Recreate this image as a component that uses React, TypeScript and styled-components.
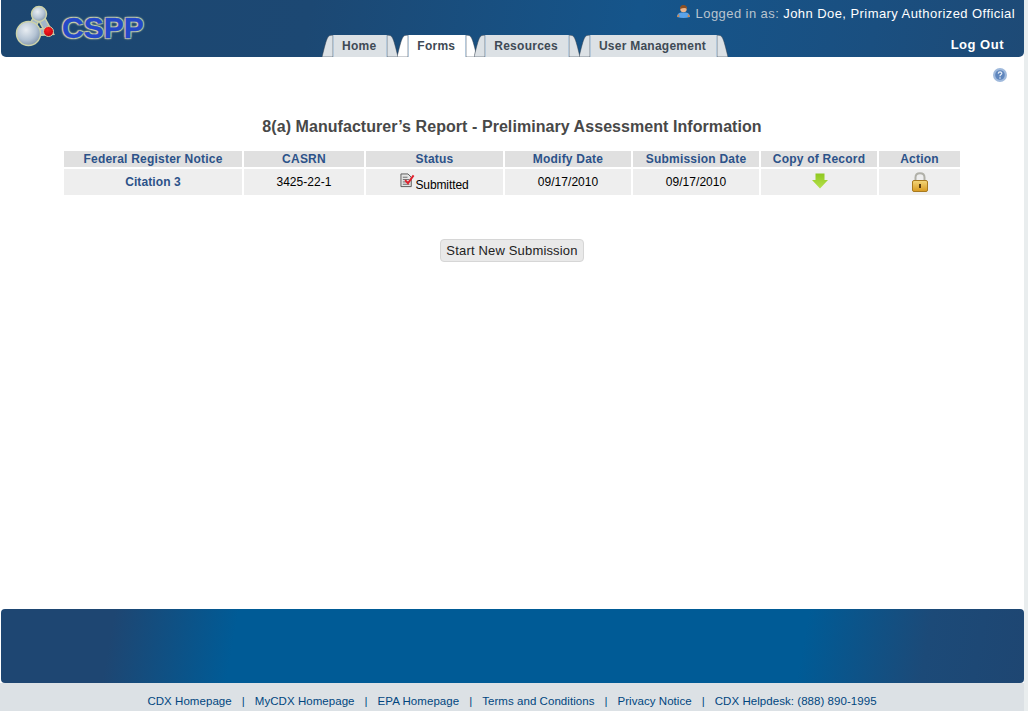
import { Fragment } from "react";
import styled, { createGlobalStyle } from "styled-components";

const GlobalStyle = createGlobalStyle`
  html, body {
    margin: 0;
    padding: 0;
    background: #fff;
    font-family: "Liberation Sans", Arial, sans-serif;
  }
`;

const Page = styled.div`
  display: flex;
  flex-direction: column;
  height: 711px;
  width: 1028px;
  overflow: hidden;
  box-sizing: border-box;
  border-right: 4px solid #e9edee;
`;

const Header = styled.header`
  display: flex;
  height: 57px;
  margin-left: 1px;
  border-radius: 0 0 5px 5px;
  background: linear-gradient(100deg, #1c4670 0%, #1c4873 30%, #15558b 62%, #1a4f80 85%, #1e4a76 100%);
`;

const LogoLink = styled.a`
  display: flex;
  flex: 0 0 321px;
  align-items: flex-start;
  gap: 5px;
  padding: 5px 0 0 14px;
  box-sizing: border-box;
`;

const LogoText = styled.span`
  margin-top: 5px;
  font-size: 30px;
  line-height: 36px;
  font-weight: 700;
  color: #2448c8;
  -webkit-text-stroke: 0.4px #2448c8;
  text-shadow: 0 0 3px #ccd2aa, 1px 1px 1px #ccd2aa, -1px -1px 1px #ccd2aa, 1px -1px 1px #ccd2aa, -1px 1px 1px #ccd2aa;
`;

const Tabs = styled.nav`
  display: flex;
  flex: 0 0 auto;
  align-items: flex-end;
`;

const Tab = styled.a<{ $active?: boolean; $overlap: number }>`
  display: flex;
  height: 22px;
  margin-left: ${(p) => p.$overlap}px;
  color: ${(p) => (p.$active ? "#fff" : "#dce1e5")};
`;

const TabLabel = styled.span<{ $active?: boolean }>`
  padding: 4px 10px 0 8px;
  border-left: 1px solid #b4c8da;
  border-right: 1px solid #b4c8da;
  background: ${(p) => (p.$active ? "#fff" : "#dce1e5")};
  color: #3f4a55;
  font-size: 12px;
  line-height: 14px;
  font-weight: 700;
  letter-spacing: 0.25px;
  white-space: nowrap;
`;

const UserArea = styled.div`
  display: flex;
  flex: 1;
  min-width: 0;
  flex-direction: column;
  align-items: flex-end;
  padding: 4px 9px 0 0;
`;

const UserLine = styled.div`
  display: flex;
  flex-shrink: 0;
  align-items: flex-start;
  gap: 5px;
  font-size: 13px;
  line-height: 20px;
  letter-spacing: 0.43px;
  color: #b9c4cf;
  white-space: nowrap;
`;

const UserName = styled.span`
  color: #fff;
`;

const LogOut = styled.a`
  margin: 12px 11px 0 0;
  font-size: 13px;
  line-height: 18px;
  font-weight: 700;
  letter-spacing: 0.5px;
  color: #fff;
`;

const Main = styled.main`
  display: flex;
  flex-direction: column;
  align-items: center;
  flex: 1;
`;

const HelpRow = styled.div`
  display: flex;
  justify-content: flex-end;
  align-self: stretch;
  height: 14px;
  padding: 11px 17px 0 0;
`;

const Title = styled.h1`
  margin: 34px 0 0;
  font-size: 16px;
  line-height: 22px;
  font-weight: 700;
  letter-spacing: 0.06px;
  color: #484848;
`;

const Table = styled.table`
  width: 900px;
  margin-top: 11px;
  border-collapse: separate;
  border-spacing: 2px;
  table-layout: fixed;
`;

const HeadCell = styled.th`
  height: 16px;
  padding: 0;
  background: #e0e0e0;
  color: #2c5289;
  font-size: 12px;
  line-height: 16px;
  font-weight: 700;
  letter-spacing: 0.22px;
  text-align: center;
`;

const Cell = styled.td`
  height: 26px;
  padding: 0;
  background: #eee;
  color: #000;
  font-size: 12px;
  line-height: 16px;
  letter-spacing: 0.05px;
  text-align: center;
  vertical-align: middle;
`;

const CitationLink = styled.a`
  color: #2c5289;
  font-weight: 700;
  letter-spacing: 0.1px;
`;

const StatusContent = styled.div`
  display: flex;
  justify-content: center;
  align-items: flex-start;
  height: 20px;
  padding-top: 1px;
  box-sizing: border-box;
`;

const StatusText = styled.span`
  margin-top: 5px;
  line-height: 15px;
  letter-spacing: -0.1px;
`;

const IconWrap = styled.div<{ $raise?: number; $shift?: number }>`
  display: flex;
  justify-content: center;
  align-items: center;
  height: 26px;
  margin-top: ${(p) => -(p.$raise ?? 0)}px;
  padding-left: ${(p) => p.$shift ?? 0}px;
`;

const StartButton = styled.button`
  width: 144px;
  height: 23px;
  margin-top: 42px;
  padding: 0;
  border: 1px solid #d6d6d6;
  border-radius: 4px;
  background: #e9e9e9;
  color: #222;
  font-family: inherit;
  font-size: 13px;
  letter-spacing: 0.17px;
`;

const FooterBand = styled.div`
  height: 74px;
  margin-left: 1px;
  border-radius: 4px;
  background: linear-gradient(100deg, #1e4672 0%, #1e4672 11%, #005b96 23%, #005b96 78%, #1c4a78 90%, #1e4672 100%);
`;

const FooterLinks = styled.footer`
  display: flex;
  justify-content: center;
  align-items: center;
  gap: 10px;
  height: 28px;
  padding-top: 8px;
  box-sizing: border-box;
  background: #dce1e5;
  color: #00467f;
  font-size: 11.5px;
  letter-spacing: 0.05px;
`;

const FooterLink = styled.a`
  color: #00467f;
  white-space: nowrap;
`;

const TabCapLeft = () => (
  <svg width="11" height="22" viewBox="0 0 11 22">
    <path d="M0 22 C2 14 4 5 6 2 Q7 0 11 0 V22 Z" fill="currentColor" stroke="#2e3b48" strokeWidth="0.5" />
  </svg>
);

const TabCapRight = () => (
  <svg width="11" height="22" viewBox="0 0 11 22">
    <path d="M11 22 C9 14 7 5 5 2 Q4 0 0 0 V22 Z" fill="currentColor" stroke="#2e3b48" strokeWidth="0.5" />
  </svg>
);

const Molecule = () => (
  <svg width="42" height="44" viewBox="0 0 42 44">
    <defs>
      <radialGradient id="ball" cx="40%" cy="35%" r="70%">
        <stop offset="0%" stopColor="#e8edf2" />
        <stop offset="60%" stopColor="#b5c4d4" />
        <stop offset="100%" stopColor="#7f93ab" />
      </radialGradient>
      <radialGradient id="oxygen" cx="40%" cy="35%" r="70%">
        <stop offset="0%" stopColor="#ff2020" />
        <stop offset="100%" stopColor="#c00010" />
      </radialGradient>
    </defs>
    <path d="M13.5 28 L24 9 L33.5 26.5 Z" fill="none" stroke="#ccd2aa" strokeWidth="8" />
    <path d="M13.5 28 L24 9 L33.5 26.5 Z" fill="none" stroke="#a2b5c9" strokeWidth="5" />
    <circle cx="24" cy="9" r="7.5" fill="url(#ball)" stroke="#ccd2aa" strokeWidth="1.5" />
    <circle cx="13.5" cy="28.5" r="12" fill="url(#ball)" stroke="#ccd2aa" strokeWidth="1.5" />
    <circle cx="33.5" cy="26.5" r="5" fill="url(#oxygen)" stroke="#ccd2aa" strokeWidth="1" />
  </svg>
);

const UserIcon = () => (
  <svg width="15" height="15" viewBox="0 0 15 15">
    <path d="M1 13 Q1 9 5 8.5 H10 Q14 9 14 13 Q7.5 15 1 13 Z" fill="#5aa3ea" />
    <path d="M1 13 Q1.5 10.5 3 10 L3.5 13 Z M14 13 Q13.5 10.5 12 10 L11.5 13 Z" fill="#c98a55" />
    <circle cx="7.5" cy="5" r="3.2" fill="#eeb68c" />
    <path d="M4 5 Q4 1 7.5 1 Q11 1 11 5 Q9 3 4 5 Z" fill="#8a4f22" />
  </svg>
);

const HelpIcon = () => (
  <svg width="14" height="14" viewBox="0 0 14 14">
    <circle cx="7" cy="7" r="7" fill="#9fb9dc" />
    <circle cx="7" cy="7" r="4.8" fill="#5f86bd" />
    <path d="M5.2 5.6 Q5.4 3.9 7.1 3.9 Q8.9 4 8.8 5.5 Q8.7 6.4 7.6 6.9 Q7 7.2 7 8.2" fill="none" stroke="#e8eff8" strokeWidth="1.2" />
    <circle cx="7" cy="10" r="0.8" fill="#e8eff8" />
  </svg>
);

const SubmittedIcon = () => (
  <svg width="15" height="15" viewBox="0 0 16 16">
    <path d="M1 1 H8.5 L12 4.5 V14.5 H1 Z" fill="#e4e4e4" stroke="#555" />
    <path d="M3 4.5 H8 M3 7 H10 M3 9.5 H10 M3 12 H10" stroke="#666" />
    <path d="M5.5 7.5 L8.5 11 L14.5 2.5" fill="none" stroke="#e0202c" strokeWidth="2" />
  </svg>
);

const DownloadIcon = () => (
  <svg width="16" height="16" viewBox="0 0 16 16">
    <defs>
      <linearGradient id="arrowFill" x1="0" y1="0" x2="0" y2="1">
        <stop offset="0%" stopColor="#8fc820" />
        <stop offset="100%" stopColor="#b4e04a" />
      </linearGradient>
    </defs>
    <path d="M3.5 0.5 H12.5 V7 H16 L8 15.5 L0 7 H3.5 Z" fill="url(#arrowFill)" />
  </svg>
);

const LockIcon = () => (
  <svg width="16" height="20" viewBox="0 0 16 20">
    <defs>
      <linearGradient id="lockBody" x1="0" y1="0" x2="0" y2="1">
        <stop offset="0%" stopColor="#f4d77a" />
        <stop offset="100%" stopColor="#d89a20" />
      </linearGradient>
    </defs>
    <path d="M3.5 9 V5.5 Q3.5 1.2 8 1.2 Q12.5 1.2 12.5 5.5 V9" fill="none" stroke="#b0b0a8" strokeWidth="2" />
    <rect x="0.5" y="8.5" width="15" height="11" rx="1.5" fill="url(#lockBody)" stroke="#a87a20" />
    <rect x="7" y="12" width="2" height="4" fill="#5a3c10" />
  </svg>
);

const columns = [
  { title: "Federal Register Notice", width: 178 },
  { title: "CASRN", width: 120 },
  { title: "Status", width: 137 },
  { title: "Modify Date", width: 126 },
  { title: "Submission Date", width: 126 },
  { title: "Copy of Record", width: 116 },
  { title: "Action", width: 81 },
];

const tabs = [
  { label: "Home", overlap: 0 },
  { label: "Forms", overlap: -1, active: true },
  { label: "Resources", overlap: -3 },
  { label: "User Management", overlap: -1 },
];

const footerLinks = [
  "CDX Homepage",
  "MyCDX Homepage",
  "EPA Homepage",
  "Terms and Conditions",
  "Privacy Notice",
  "CDX Helpdesk: (888) 890-1995",
];

export default function App() {
  return (
    <Page>
      <GlobalStyle />
      <Header>
        <LogoLink>
          <Molecule />
          <LogoText>CSPP</LogoText>
        </LogoLink>
        <Tabs>
          {tabs.map((tab) => (
            <Tab key={tab.label} $active={tab.active} $overlap={tab.overlap}>
              <TabCapLeft />
              <TabLabel $active={tab.active}>{tab.label}</TabLabel>
              <TabCapRight />
            </Tab>
          ))}
        </Tabs>
        <UserArea>
          <UserLine>
            <UserIcon />
            <span>
              Logged in as: <UserName>John Doe, Primary Authorized Official</UserName>
            </span>
          </UserLine>
          <LogOut>Log Out</LogOut>
        </UserArea>
      </Header>
      <Main>
        <HelpRow>
          <HelpIcon />
        </HelpRow>
        <Title>8(a) Manufacturer’s Report - Preliminary Assessment Information</Title>
        <Table>
          <colgroup>
            {columns.map((col) => (
              <col key={col.title} width={col.width} />
            ))}
          </colgroup>
          <thead>
            <tr>
              {columns.map((col) => (
                <HeadCell key={col.title}>{col.title}</HeadCell>
              ))}
            </tr>
          </thead>
          <tbody>
            <tr>
              <Cell>
                <CitationLink>Citation 3</CitationLink>
              </Cell>
              <Cell>3425-22-1</Cell>
              <Cell>
                <StatusContent>
                  <SubmittedIcon />
                  <StatusText>Submitted</StatusText>
                </StatusContent>
              </Cell>
              <Cell>09/17/2010</Cell>
              <Cell>09/17/2010</Cell>
              <Cell>
                <IconWrap $raise={2} $shift={2}>
                  <DownloadIcon />
                </IconWrap>
              </Cell>
              <Cell>
                <IconWrap>
                  <LockIcon />
                </IconWrap>
              </Cell>
            </tr>
          </tbody>
        </Table>
        <StartButton>Start New Submission</StartButton>
      </Main>
      <FooterBand />
      <FooterLinks>
        {footerLinks.map((link, i) => (
          <Fragment key={link}>
            {i > 0 && <span>|</span>}
            <FooterLink>{link}</FooterLink>
          </Fragment>
        ))}
      </FooterLinks>
    </Page>
  );
}
